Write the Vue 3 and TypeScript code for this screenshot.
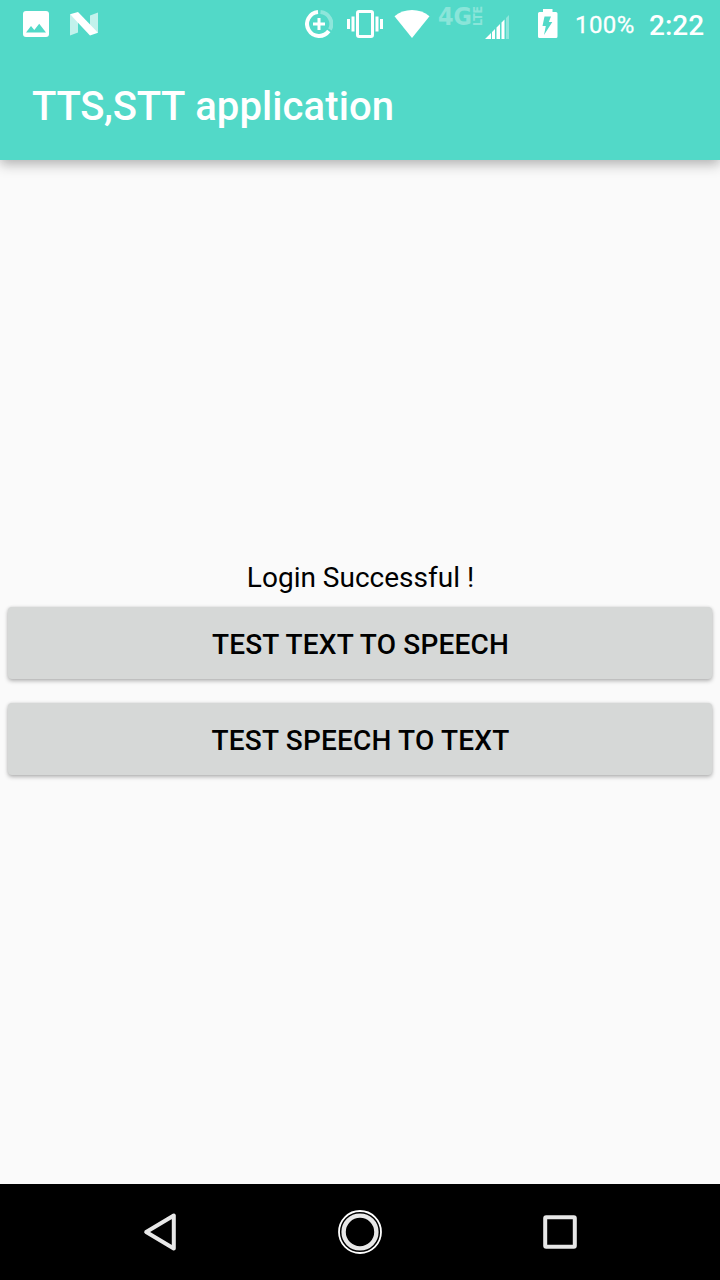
<script setup lang="ts">
const titleWords: string[] = ['TTS,STT', 'application']
const message = 'Login Successful !'
const actions: string[] = ['Test text to speech', 'Test speech to text']
</script>

<template>
  <div class="screen">
    <header class="top">
      <div class="status">
        <svg class="picture" width="26" height="26" viewBox="0 0 26 26">
          <rect width="26" height="26" rx="3" fill="#fff" />
          <path d="M3 21.5L8 15L11.3 19L16.2 12.7L23 21.5Z" fill="#52d9c8" />
        </svg>
        <svg class="nougat" width="28" height="24" viewBox="0 0 28 24">
          <path d="M0 2.2L8 9V20.5L0 23.5Z" fill="#fff" opacity=".65" />
          <path d="M20 3.5L28 .5V21L20 15Z" fill="#fff" opacity=".65" />
          <path d="M0 2.2L8 0L28 20.8L20 23.5Z" fill="#fff" />
        </svg>
        <svg class="saver" width="28" height="28" viewBox="0 0 28 28" fill="none" stroke="#fff">
          <path d="M15.5 2A12 12 0 0 1 25 19.5" stroke-width="4" opacity=".35" />
          <path d="M13 2A12 12 0 1 0 23.8 21" stroke-width="4" />
          <path d="M14 8V20M8 14H20" stroke-width="3" />
        </svg>
        <svg class="vibrate" width="36" height="28" viewBox="0 0 36 28">
          <rect x="10.5" y="1.5" width="15" height="25" rx="1.5" fill="none" stroke="#fff" stroke-width="3" />
          <path d="M0 9H3V19H0ZM4.5 6.5H7.5V21.5H4.5ZM28.5 6.5H31.5V21.5H28.5ZM33 9H36V19H33Z" fill="#fff" />
        </svg>
        <svg class="wifi" width="36" height="28" viewBox="0 0 36 28">
          <path d="M.5 6.2C10 -2 26 -2 35.5 6.2L18 28Z" fill="#fff" />
        </svg>
        <svg class="network" width="48" height="32" viewBox="-1 -7 48 32" fill="#fff" opacity=".32">
          <text class="gen" x="0" y="18" textLength="34" lengthAdjust="spacingAndGlyphs">4G</text>
          <text class="lte" transform="translate(43.5 19) rotate(-90)" x="0" y="0" textLength="20" lengthAdjust="spacingAndGlyphs">LTE</text>
        </svg>
        <svg class="signal" width="24" height="24" viewBox="0 0 24 24" fill="#fff">
          <path d="M0 24L6 18V24ZM7 17L10 14V24H7ZM11.5 12.5L15 9V24H11.5ZM16.5 7.5L19.5 4.5V24H16.5Z" />
          <path d="M21 3L24 0V24H21Z" opacity=".35" />
        </svg>
        <svg class="battery" width="20" height="29" viewBox="0 0 20 29">
          <path d="M5 0H14.5V3H18Q19.5 3 19.5 4.5V27.5Q19.5 29 18 29H1.5Q0 29 0 27.5V4.5Q0 3 1.5 3H5Z" fill="#fff" />
          <path d="M6.5 7.5H13L10.8 13H14.3L6 26L7.8 17H4.5Z" fill="#52d9c8" />
        </svg>
        <span class="percent">100%</span>
        <span class="clock">2:22</span>
      </div>
      <h1><span>{{ titleWords[0] }}</span> {{ titleWords[1] }}</h1>
    </header>

    <main>
      <p>{{ message }}</p>
      <button v-for="action in actions" :key="action" type="button">{{ action }}</button>
    </main>

    <nav>
      <svg width="44" height="44" viewBox="0 0 44 44">
        <path d="M8.2 22L35.8 5.5V38.5Z" transform="translate(0 0)" fill="none" stroke="#e8e8e8" stroke-width="4" stroke-linejoin="round" />
      </svg>
      <svg width="44" height="44" viewBox="0 0 44 44" fill="none">
        <circle cx="22" cy="22" r="21" stroke="#fff" stroke-width="1.8" />
        <circle cx="22" cy="22" r="16.4" stroke="#e8e8e8" stroke-width="4.4" />
      </svg>
      <svg width="44" height="44" viewBox="0 0 44 44">
        <rect x="7.2" y="7.2" width="29.6" height="29.6" rx="1" fill="none" stroke="#e8e8e8" stroke-width="4" />
      </svg>
    </nav>
  </div>
</template>

<style>
body {
  margin: 0;
}
</style>

<style scoped>
.screen {
  width: 720px;
  height: 1280px;
  display: flex;
  flex-direction: column;
  background: #fafafa;
  font-family: Roboto, sans-serif;
  overflow: hidden;
}

.top {
  height: 160px;
  flex: none;
  background: #52d9c8;
  color: #fff;
  box-shadow: 0 5px 12px rgba(0, 0, 0, 0.24), 0 1px 10px rgba(0, 0, 0, 0.08);
}

.status {
  height: 48px;
  display: flex;
  align-items: flex-start;
}

.status svg {
  flex: none;
}

.picture { margin: 11px 0 0 23px; }
.nougat { margin: 12px 0 0 21px; }
.saver { margin: 10px 0 0 207px; }
.vibrate { margin: 10px 0 0 14px; }
.wifi { margin: 10px 0 0 11px; }
.network { margin: 0 0 0 7px; overflow: visible; }
.signal { margin: 15px 0 0 0; }
.battery { margin: 9px 0 0 29px; }

.gen {
  font: 700 25px "DejaVu Sans", sans-serif;
}

.lte {
  font: 700 12px "DejaVu Sans", sans-serif;
}

.percent {
  margin: 11px 0 0 17px;
  font-size: 24px;
  line-height: 28px;
  width: 74px;
  letter-spacing: 0.4px;
  -webkit-text-stroke: 0.3px #fff;
}

.clock {
  margin-top: 9px;
  font-size: 28px;
  font-weight: 500;
  line-height: 33px;
}

h1 {
  margin: 0;
  padding: 0 32px;
  height: 112px;
  font-size: 40px;
  font-weight: 500;
  line-height: 118px;
  letter-spacing: 0.1px;
}

h1 span {
  letter-spacing: -0.3px;
}

main {
  flex: 1;
  display: flex;
  flex-direction: column;
  justify-content: center;
  gap: 24px;
  padding: 0 8px 8px;
}

p {
  margin: 0 0 -12px;
  padding-left: 1px;
  font-size: 28px;
  line-height: 34px;
  text-align: center;
  color: #000;
}

button {
  height: 72px;
  border: 0;
  border-radius: 4px;
  padding: 2px 0 0 1px;
  background: #d6d8d7;
  box-shadow: 0 2px 4px rgba(0, 0, 0, 0.28), 0 0 3px rgba(0, 0, 0, 0.1);
  color: #000;
  font: 500 28px/33px Roboto, sans-serif;
  letter-spacing: 0.2px;
  text-transform: uppercase;
}

nav {
  height: 96px;
  flex: none;
  display: flex;
  align-items: center;
  justify-content: center;
  gap: 156px;
  background: #000;
}
</style>
